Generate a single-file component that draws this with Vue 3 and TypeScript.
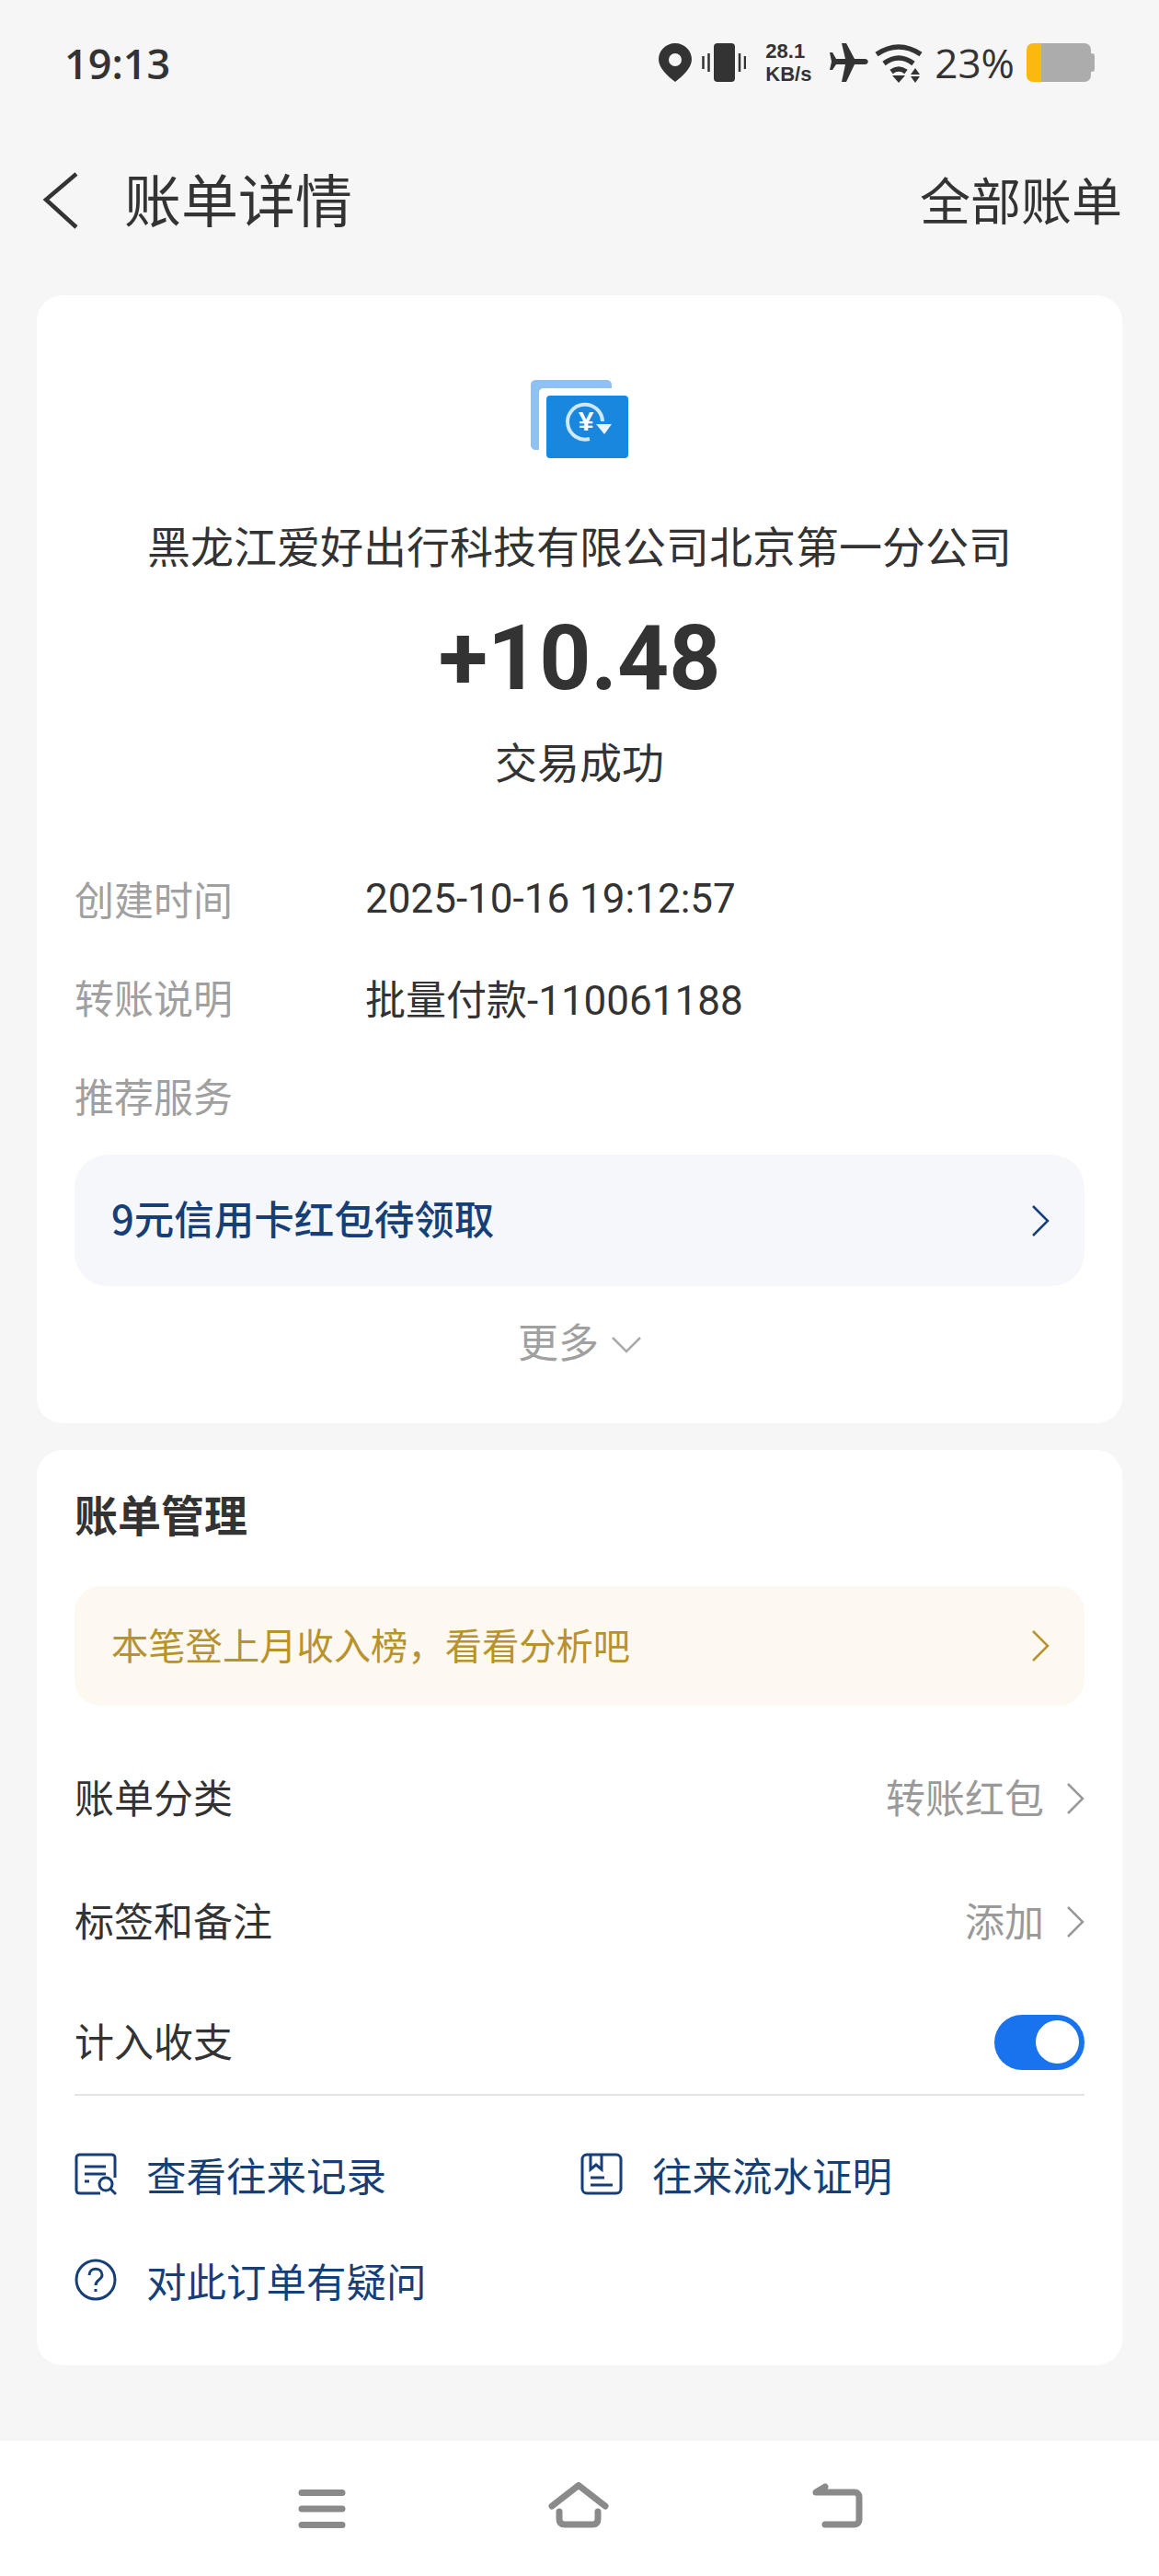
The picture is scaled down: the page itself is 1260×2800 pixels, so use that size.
<script setup lang="ts">
const details = [
  { label: '创建时间', value: '2025-10-16 19:12:57' },
  { label: '转账说明', value: '批量付款-110061188' },
]
</script>

<template>
  <div class="page">
    <header class="status-bar">
      <span class="time">19:13</span>
      <div class="status-icons">
        <svg width="36" height="42" viewBox="0 0 36 42">
          <path fill-rule="evenodd" fill="#333" d="M18 0C8 0 0 8 0 17.500 0 27 10 36 18 42 26 36 36 27 36 17.500 36 8 28 0 18 0Zm0 11a7 7 0 1 1 0 14 7 7 0 0 1 0-14Z" />
        </svg>
        <svg class="s-vibrate" width="48" height="42" viewBox="0 0 48 42">
          <rect x="13" width="23" height="42" rx="4" fill="#333" />
          <path d="M1.500 14v14M7.500 11v20M41 11v20M47 14v14" stroke="#333" stroke-width="2.500" />
        </svg>
        <div class="speed"><span>28.1</span><span>KB/s</span></div>
        <svg class="s-plane" width="42" height="42" viewBox="0 0 42 42">
          <path fill="#333" d="M13 0h5l9 17h11c5 0 5 6 0 6H27l-9 19h-5l4-19H7l-4 6H0l2-9-2-10h3l4 7h10Z" />
        </svg>
        <svg class="s-wifi" width="52" height="43" viewBox="0 0 52 43">
          <path d="M2 12Q26-4 50 12M10 22Q26 10 42 22M18 31Q26 25 34 31" fill="none" stroke="#333" stroke-width="5.500" />
          <path fill="#333" d="M19 35h14l-7 8ZM44 27l5 7H39ZM39 36h10l-5 7Z" />
        </svg>
        <span class="percent">23%</span>
        <div class="battery"><div class="level" /><div class="rest" /><div class="tip" /></div>
      </div>
    </header>

    <nav class="nav">
      <div class="nav-left">
        <svg width="40" height="62" viewBox="0 0 40 62">
          <path d="M37 2 4 30l33 30" fill="none" stroke="#333" stroke-width="4.500" />
        </svg>
        <span class="nav-title">账单详情</span>
      </div>
      <span class="nav-link">全部账单</span>
    </nav>

    <section class="card summary">
      <svg class="logo" width="106" height="85" viewBox="0 0 106 85">
        <path fill="#8fc1f3" d="M6 0h76c4 0 6 2 6 6v3H14c-3 0-5 2-5 5v62H6c-4 0-6-2-6-6V6C0 2 2 0 6 0Z" />
        <rect x="17" y="17" width="89" height="68" rx="4" fill="#1a87de" />
        <path d="M64 64A19 19 0 1 1 78 45" fill="none" stroke="#cfe8fb" stroke-width="4" />
        <path fill="#eaf5fd" d="M71 48h17l-8 11Z" />
        <text x="60" y="55" class="yen">¥</text>
      </svg>
      <div class="merchant">黑龙江爱好出行科技有限公司北京第一分公司</div>
      <div class="amount">+10.48</div>
      <div class="state">交易成功</div>

      <div class="details">
        <div v-for="row in details" :key="row.label" class="detail-row">
          <span class="detail-label">{{ row.label }}</span>
          <span class="detail-value">{{ row.value }}</span>
        </div>
        <div class="detail-row"><span class="detail-label">推荐服务</span></div>
      </div>

      <div class="promo">
        <span class="lift">9元信用卡红包待领取</span>
        <svg width="20" height="34" viewBox="0 0 20 34">
          <path d="M2 1l16 16L2 33" fill="none" stroke="#163f78" stroke-width="2.500" />
        </svg>
      </div>
      <div class="more">
        <span>更多</span>
        <svg width="32" height="20" viewBox="0 0 32 20">
          <path d="M1 2l15 15L31 2" fill="none" stroke="#aaa" stroke-width="2.500" />
        </svg>
      </div>
    </section>

    <section class="card manage">
      <h2 class="manage-title">账单管理</h2>
      <div class="notice">
        <span class="lift">本笔登上月收入榜，看看分析吧</span>
        <svg width="20" height="34" viewBox="0 0 20 34">
          <path d="M2 1l16 16L2 33" fill="none" stroke="#b8922e" stroke-width="2.500" />
        </svg>
      </div>
      <div class="row row-category">
        <span class="lift">账单分类</span>
        <span class="row-value"><span class="lift">转账红包</span>
          <svg width="20" height="34" viewBox="0 0 20 34"><path d="M2 1l16 16L2 33" fill="none" stroke="#999" stroke-width="2.500" /></svg>
        </span>
      </div>
      <div class="row row-tags">
        <span class="lift">标签和备注</span>
        <span class="row-value"><span class="lift">添加</span>
          <svg width="20" height="34" viewBox="0 0 20 34"><path d="M2 1l16 16L2 33" fill="none" stroke="#999" stroke-width="2.500" /></svg>
        </span>
      </div>
      <div class="row row-toggle">
        <span class="lift">计入收支</span>
        <div class="switch"><div class="knob" /></div>
      </div>
      <div class="links">
        <div class="link">
          <svg width="46" height="46" viewBox="0 0 46 46" fill="none" stroke="#163f78" stroke-width="3">
            <path d="M44 27V6c0-3-1-4-4-4H6C3 2 2 3 2 6v34c0 3 1 4 4 4h22" />
            <path d="M11 15h23M11 23h23M11 31h5" />
            <circle cx="34" cy="34" r="7" />
            <path d="m39 39 6 6" />
          </svg>
          <span>查看往来记录</span>
        </div>
        <div class="link">
          <svg width="46" height="46" viewBox="0 0 46 46" fill="none" stroke="#163f78" stroke-width="3">
            <rect x="2" y="2" width="42" height="42" rx="5" />
            <path d="M11 2v16l6-5 6 5V2M11 27h15M11 35h24" />
          </svg>
          <span>往来流水证明</span>
        </div>
        <div class="link">
          <svg width="46" height="46" viewBox="0 0 46 46" fill="none" stroke="#163f78" stroke-width="3">
            <circle cx="23" cy="23" r="21" />
            <path d="M16 18c0-9 14-9 14 0 0 5-7 5-7 11" />
            <path d="M23 33v3" />
          </svg>
          <span>对此订单有疑问</span>
        </div>
      </div>
    </section>

    <footer class="bottom-bar">
      <svg width="52" height="42" viewBox="0 0 52 42" fill="none" stroke="#8a8a8a" stroke-width="7" stroke-linecap="round">
        <path d="M4 3.500h44M4 21h44M4 38.500h44" />
      </svg>
      <svg width="66" height="50" viewBox="0 0 66 50" fill="none" stroke="#8a8a8a" stroke-width="7" stroke-linecap="round" stroke-linejoin="round">
        <path d="M4 26 33 3.500 62 26" />
        <path d="M12 32v8c0 4 2 6 6 6h30c4 0 6-2 6-6v-8" />
      </svg>
      <svg width="56" height="49" viewBox="0 0 56 49" fill="none" stroke="#8a8a8a" stroke-width="7" stroke-linecap="round" stroke-linejoin="round">
        <path d="M15 45h32c3 0 5-2 5-5V15c0-3-2-5-5-5H5l10-6" />
      </svg>
    </footer>
  </div>
</template>

<style scoped>
.page {
  width: 1260px;
  height: 2800px;
  display: flex;
  flex-direction: column;
  background: #f6f6f6;
  color: #333;
  font-family: "Noto Sans CJK SC", "Noto Sans", sans-serif;
  overflow: hidden;
}

.status-bar {
  height: 136px;
  flex-shrink: 0;
  box-sizing: border-box;
  padding: 0 70px;
  display: flex;
  align-items: center;
  justify-content: space-between;
}

.time {
  font-family: "Open Sans", sans-serif;
  font-size: 45px;
  font-weight: 600;
}

.status-icons {
  display: flex;
  align-items: center;
}

.s-vibrate {
  margin-left: 11px;
}

.speed {
  display: flex;
  flex-direction: column;
  width: 50px;
  margin-left: 21px;
  font-family: "Liberation Sans", sans-serif;
  font-size: 22px;
  font-weight: 700;
  line-height: 25.500px;
}

.s-plane {
  margin-left: 20px;
}

.s-wifi {
  margin-left: 7px;
}

.percent {
  margin-left: 13px;
  font-family: "Open Sans", sans-serif;
  font-size: 44px;
  font-weight: 500;
}

.battery {
  width: 74px;
  height: 42px;
  display: flex;
  margin-left: 13px;
}

.level {
  width: 16px;
  background: #fbb80e;
  border-radius: 7px 0 0 7px;
}

.rest {
  width: 54px;
  background: #acacac;
  border-radius: 0 7px 7px 0;
}

.tip {
  width: 4px;
  height: 20px;
  margin-top: 11px;
  background: #acacac;
  border-radius: 0 3px 3px 0;
}

.nav {
  height: 166px;
  flex-shrink: 0;
  box-sizing: border-box;
  padding: 0 40px 0 46px;
  display: flex;
  align-items: center;
  justify-content: space-between;
  margin-top: -1px;
  margin-bottom: 20px;
}

.nav-left {
  display: flex;
  align-items: center;
  gap: 49px;
}

.nav-title {
  font-size: 62px;
  line-height: 80px;
  padding-bottom: 6px;
}

.nav-link {
  font-size: 55px;
  line-height: 80px;
  padding-bottom: 6px;
}

.card {
  margin: 0 40px;
  background: #fff;
  border-radius: 28px;
  box-sizing: border-box;
  padding: 0 41px;
}

.lift {
  padding-bottom: 6px;
}

.summary {
  height: 1226px;
  flex-shrink: 0;
  display: flex;
  flex-direction: column;
  align-items: center;
  padding-top: 92px;
}

.logo {
  flex-shrink: 0;
}

.yen {
  font-family: "Liberation Sans", sans-serif;
  font-size: 30px;
  font-weight: 700;
  fill: #fff;
  text-anchor: middle;
}

.merchant {
  margin-top: 59px;
  font-size: 47px;
  line-height: 70px;
  white-space: nowrap;
}

.amount {
  margin-top: 29px;
  font-family: "Roboto", sans-serif;
  font-size: 98px;
  font-weight: 700;
  line-height: 120px;
}

.state {
  margin-top: 15px;
  font-size: 46px;
  line-height: 70px;
}

.details {
  align-self: stretch;
  margin-top: 86px;
  display: flex;
  flex-direction: column;
  gap: 47px;
}

.detail-row {
  display: flex;
  height: 60px;
  align-items: center;
  font-size: 43px;
}

.detail-label {
  width: 316px;
  padding-bottom: 2px;
  color: #a0a0a0;
}

.detail-value {
  color: #333;
  font-family: "Roboto", "Noto Sans CJK SC", sans-serif;
  font-size: 44px;
}

.promo {
  align-self: stretch;
  height: 143px;
  flex-shrink: 0;
  margin-top: 34px;
  box-sizing: border-box;
  padding: 0 38px 0 40px;
  display: flex;
  align-items: center;
  justify-content: space-between;
  background: #f5f7fb;
  border-radius: 36px;
  color: #163f78;
  font-size: 43.500px;
  font-weight: 500;
}

.more {
  margin-top: 28px;
  display: flex;
  align-items: center;
  gap: 14px;
  font-size: 44px;
  line-height: 62px;
  color: #a0a0a0;
}

.more svg {
  margin-top: 10px;
}

.manage {
  margin-top: 29px;
  height: 995px;
  flex-shrink: 0;
  padding-top: 37px;
}

.manage-title {
  margin: 0;
  font-size: 47px;
  font-weight: 700;
  line-height: 64px;
}

.notice {
  margin-top: 47px;
  height: 130px;
  box-sizing: border-box;
  padding: 0 38px 0 40px;
  display: flex;
  align-items: center;
  justify-content: space-between;
  background: #fdf8f0;
  border-radius: 28px;
  color: #b8922e;
  font-size: 40.300px;
}

.row {
  display: flex;
  align-items: center;
  justify-content: space-between;
  font-size: 43px;
  height: 64px;
}

.row-category {
  margin-top: 69px;
}

.row-tags {
  margin-top: 70px;
}

.row-toggle {
  margin-top: 67px;
}

.row-value {
  display: flex;
  align-items: center;
  gap: 24px;
  color: #9a9a9a;
}

.switch {
  width: 98px;
  height: 60px;
  box-sizing: border-box;
  padding: 6px;
  display: flex;
  justify-content: flex-end;
  background: #1a73ee;
  border-radius: 30px;
}

.knob {
  width: 47px;
  height: 47px;
  background: #fff;
  border-radius: 50%;
}

.links {
  margin-top: 24px;
  padding-top: 55px;
  border-top: 2px solid #e4e4e4;
  display: grid;
  grid-template-columns: 550px 1fr;
  row-gap: 55px;
}

.link {
  display: flex;
  align-items: center;
  gap: 32px;
  height: 60px;
  color: #163f78;
  font-size: 43.500px;
}

.bottom-bar {
  margin-top: 82px;
  flex: 1;
  background: #fff;
  display: flex;
  align-items: flex-end;
  justify-content: space-between;
  box-sizing: border-box;
  padding: 0 322px 52px 324px;
}
</style>

<style>
body {
  background: #f6f6f6;
}
</style>
